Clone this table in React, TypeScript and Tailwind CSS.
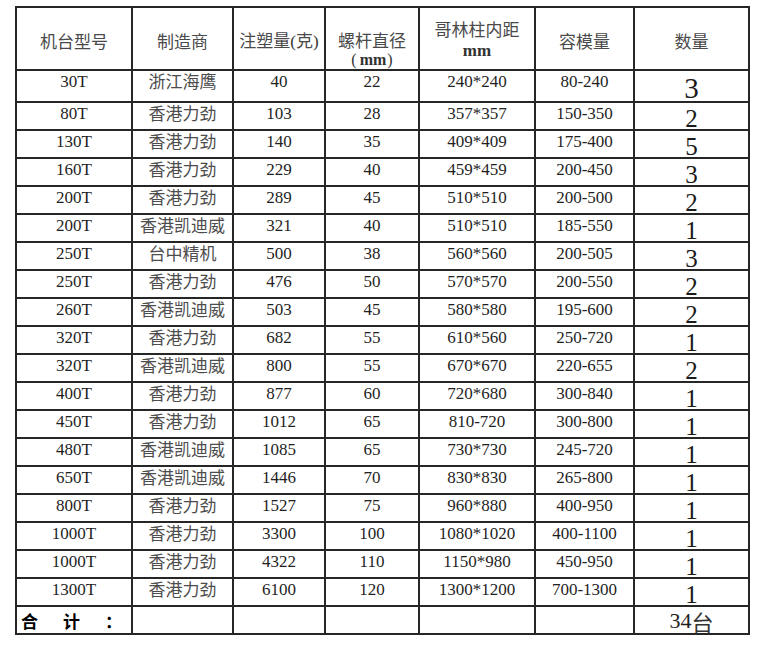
import React from "react";

type Row = [string, string, string, string, string, string, string];

const rows: Row[] = [
  ["30T", "浙江海鹰", "40", "22", "240*240", "80-240", "3"],
  ["80T", "香港力劲", "103", "28", "357*357", "150-350", "2"],
  ["130T", "香港力劲", "140", "35", "409*409", "175-400", "5"],
  ["160T", "香港力劲", "229", "40", "459*459", "200-450", "3"],
  ["200T", "香港力劲", "289", "45", "510*510", "200-500", "2"],
  ["200T", "香港凯迪威", "321", "40", "510*510", "185-550", "1"],
  ["250T", "台中精机", "500", "38", "560*560", "200-505", "3"],
  ["250T", "香港力劲", "476", "50", "570*570", "200-550", "2"],
  ["260T", "香港凯迪威", "503", "45", "580*580", "195-600", "2"],
  ["320T", "香港力劲", "682", "55", "610*560", "250-720", "1"],
  ["320T", "香港凯迪威", "800", "55", "670*670", "220-655", "2"],
  ["400T", "香港力劲", "877", "60", "720*680", "300-840", "1"],
  ["450T", "香港力劲", "1012", "65", "810-720", "300-800", "1"],
  ["480T", "香港凯迪威", "1085", "65", "730*730", "245-720", "1"],
  ["650T", "香港凯迪威", "1446", "70", "830*830", "265-800", "1"],
  ["800T", "香港力劲", "1527", "75", "960*880", "400-950", "1"],
  ["1000T", "香港力劲", "3300", "100", "1080*1020", "400-1100", "1"],
  ["1000T", "香港力劲", "4322", "110", "1150*980", "450-950", "1"],
  ["1300T", "香港力劲", "6100", "120", "1300*1200", "700-1300", "1"],
];

const cell = "border-r-2 border-b-2 border-[#262626] overflow-visible";
const serif = "font-['Liberation_Serif','Noto_Sans_CJK_SC',serif]";
const cjk = "font-['Noto_Sans_CJK_SC','Liberation_Serif',sans-serif]";

function HeaderCell({ children }: { children: React.ReactNode }) {
  return (
    <div
      className={`${cell} ${cjk} flex items-center justify-center pt-[4px] text-[17px] leading-[22px] text-[#4a4a4a]`}
    >
      {children}
    </div>
  );
}

export default function App() {
  return (
    <div className="min-h-[654px] w-[771px] bg-white pl-[15px] pt-[6px]">
      <div className="grid w-[735px] grid-cols-[116px_101px_92px_94px_116px_99px_115px] grid-rows-[63px_32px_repeat(19,28px)] border-l-2 border-t-2 border-[#262626]">
        <HeaderCell>机台型号</HeaderCell>
        <HeaderCell>制造商</HeaderCell>
        <HeaderCell>
          <span className="whitespace-nowrap">
            注塑量<span className={`${serif} text-[#333]`}>(</span>克
            <span className={`${serif} text-[#333]`}>)</span>
          </span>
        </HeaderCell>
        <div
          className={`${cell} ${cjk} flex flex-col items-center pt-[20px] text-[17px] leading-[24px] text-[#4a4a4a]`}
        >
          <span className="whitespace-nowrap">螺杆直径</span>
          <span className={`whitespace-nowrap ${serif} text-[16px] leading-[16px] text-[#333]`}>
            <span className="mr-[3px]">(</span>
            <span className="font-bold">mm</span>
            <span className="ml-[1px]">)</span>
          </span>
        </div>
        <div
          className={`${cell} ${cjk} flex flex-col items-center pt-[10px] text-[17px] leading-[22px] text-[#4a4a4a]`}
        >
          <span className="whitespace-nowrap">哥林柱内距</span>
          <span className={`${serif} font-bold text-[#333]`}>mm</span>
        </div>
        <HeaderCell>容模量</HeaderCell>
        <HeaderCell>数量</HeaderCell>

        {rows.map((r, i) => (
          <React.Fragment key={i}>
            <div className={`${cell} ${serif} flex justify-center pt-[1px] text-[17px] leading-[20px] text-[#1f1f1f]`}>
              {r[0]}
            </div>
            <div className={`${cell} ${cjk} flex justify-center pt-0 text-[17px] leading-[20px] text-[#4d4d4d]`}>
              {r[1]}
            </div>
            <div className={`${cell} ${serif} flex justify-center pt-[1px] text-[17px] leading-[20px] text-[#1f1f1f]`}>
              {r[2]}
            </div>
            <div className={`${cell} ${serif} flex justify-center pt-[1px] text-[17px] leading-[20px] text-[#1f1f1f]`}>
              {r[3]}
            </div>
            <div className={`${cell} ${serif} flex justify-center pt-[1px] text-[17px] leading-[20px] text-[#1f1f1f]`}>
              {r[4]}
            </div>
            <div className={`${cell} ${serif} flex justify-center pt-[1px] text-[17px] leading-[20px] text-[#1f1f1f]`}>
              {r[5]}
            </div>
            <div
              className={`${cell} ${serif} flex justify-center text-[#1a1a1a] ${
                i === 0 ? "pt-[3px] text-[29px] leading-[29px]" : "pt-[3px] text-[25px] leading-[25px]"
              }`}
            >
              {r[6]}
            </div>
          </React.Fragment>
        ))}

        <div className={`${cell} ${cjk} flex items-start pl-[4px] pt-[3px] text-[17px] font-bold leading-[22px] text-black`}>
          <span>合</span>
          <span className="ml-[25px]">计</span>
          <span className="ml-[25px]">：</span>
        </div>
        <div className={cell} />
        <div className={cell} />
        <div className={cell} />
        <div className={cell} />
        <div className={cell} />
        <div className={`${cell} ${serif} flex justify-center pt-[3px] text-[22px] leading-[22px] text-[#1f1f1f]`}>
          34<span className={`${cjk} text-[#333]`}>台</span>
        </div>
      </div>
    </div>
  );
}
